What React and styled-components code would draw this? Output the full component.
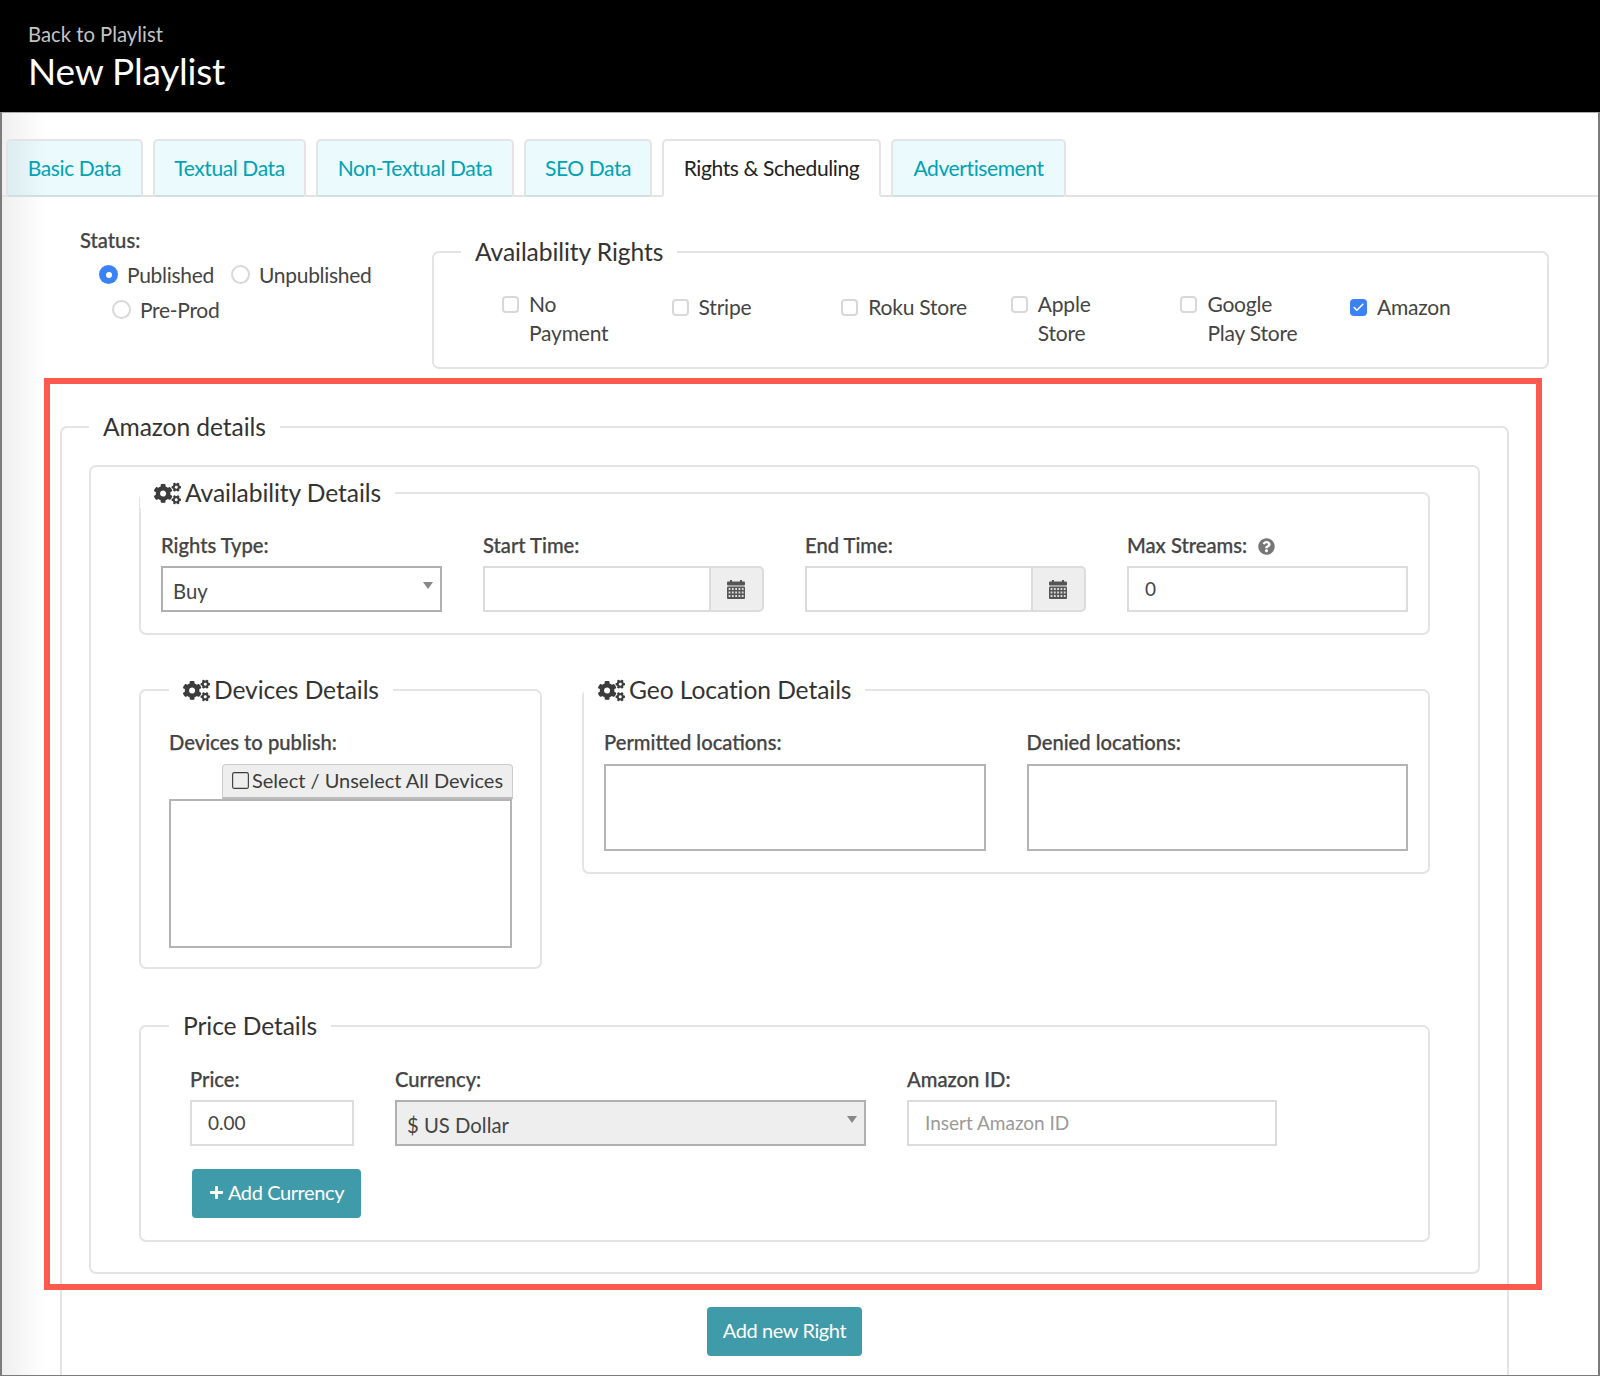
import styled, { createGlobalStyle } from 'styled-components';
import { Check, Square } from 'lucide-react';
import { FaCogs, FaQuestionCircle, FaPlus } from 'react-icons/fa';

const GlobalStyle = createGlobalStyle`
  * { box-sizing: border-box; }
  body {
    margin: 0;
    background: #fff;
    font-family: Lato, "Open Sans", sans-serif;
    color: #333;
  }
`;

const Page = styled.div`
  position: relative;
  width: 1600px;
  height: 1376px;
  overflow: hidden;
`;

const Header = styled.header`
  height: 112px;
  background: #000;
  padding: 21px 0 0 28px;
`;

const BackLink = styled.a`
  display: block;
  color: #c4c4c4;
  font-size: 20.3px;
  line-height: 27px;
`;

const Title = styled.h1`
  margin: 0;
  color: #fff;
  font-size: 37px;
  line-height: 46px;
  font-weight: 400;
  letter-spacing: -0.2px;
`;

const Content = styled.main`
  height: 1264px;
  overflow: hidden;
  border: 2px solid #7c7c7c;
  border-top: 1px solid #aaa;
  border-bottom: 1px solid #7c7c7c;
  background: linear-gradient(90deg, #efefef 0, #fff 44px);
`;

const TabBar = styled.nav`
  display: flex;
  gap: 10px;
  height: 84px;
  padding: 26px 0 0 4px;
  border-bottom: 2px solid #e2e2e2;
`;

const Tab = styled.a`
  width: ${(p) => p.$w}px;
  height: 58px;
  border: 2px solid #e4e4e4;
  border-bottom: ${(p) => (p.$active ? '2px solid #fff' : '0')};
  border-radius: 5px 5px 0 0;
  background: ${(p) => (p.$active ? '#fff' : 'rgba(0, 190, 225, 0.08)')};
  color: ${(p) => (p.$active ? '#222' : '#00a2b3')};
  font-size: 21px;
  line-height: 54px;
  letter-spacing: -0.4px;
  text-align: center;
`;

const TopRow = styled.section`
  display: grid;
  grid-template-columns: 430px 1117px;
  align-items: start;
  margin-top: 40px;
`;

const StatusBlock = styled.div`
  margin: -9px 0 0 78px;
`;

const FieldLabel = styled.label`
  display: block;
  color: #444;
  font-size: 20.2px;
  line-height: 24px;
  font-weight: 500;
  -webkit-text-stroke: 0.25px #444;
  margin-bottom: ${(p) => p.$gap ?? 9}px;
`;

const RadioRow = styled.div`
  display: flex;
  align-items: center;
  height: 35px;
  margin-left: ${(p) => p.$indent}px;
`;

const RadioItem = styled.span`
  display: flex;
  align-items: center;
  flex: none;
  gap: 9px;
  width: ${(p) => p.$w}px;
  font-size: 21px;
  letter-spacing: -0.3px;
  color: #444;
`;

const RadioDot = styled.span`
  position: relative;
  flex: none;
  width: 19px;
  height: 19px;
  border-radius: 50%;
  border: ${(p) => (p.$on ? '0' : '2px solid #d8d8d8')};
  background: ${(p) => (p.$on ? '#3b82f6' : '#fff')};
  &::after {
    content: '';
    display: ${(p) => (p.$on ? 'block' : 'none')};
    position: absolute;
    left: 6.5px;
    top: 6.5px;
    width: 6px;
    height: 6px;
    border-radius: 50%;
    background: #fff;
  }
`;

const Box = styled.fieldset`
  min-width: 0;
  margin: ${(p) => p.$margin ?? '0'};
  padding: ${(p) => p.$pad};
  border: 2px solid #e4e4e4;
  border-radius: 7px;
`;

const BoxTitle = styled.legend`
  display: flex;
  align-items: center;
  gap: 4px;
  margin-left: ${(p) => p.$ml ?? 0}px;
  padding: 0 14px;
  color: #333;
  font-size: 24.6px;
  line-height: 30px;
  letter-spacing: -0.08px;
  svg {
    color: #3c3c3c;
    font-size: 27px;
  }
`;

const PayGrid = styled.div`
  display: grid;
  grid-template-columns: repeat(6, 169.6px);
`;

const PayItem = styled.div`
  display: flex;
  align-items: flex-start;
  gap: 10px;
  margin-top: ${(p) => (p.$single ? 3 : 0)}px;
  color: #444;
  font-size: 21px;
  line-height: 28.5px;
  letter-spacing: -0.2px;
`;

const CheckBox = styled.span`
  display: flex;
  align-items: center;
  justify-content: center;
  flex: none;
  width: 17px;
  height: 17px;
  margin-top: 6px;
  border: ${(p) => (p.$on ? '0' : '2px solid #d8d8d8')};
  border-radius: 4px;
  background: ${(p) => (p.$on ? '#3b82f6' : '#fff')};
  color: #fff;
`;

const OuterBox = styled.div`
  padding: 11px 48px 30px;
  border: 2px solid #e4e4e4;
  border-radius: 7px;
`;

const FieldGrid = styled.div`
  display: grid;
  grid-template-columns: ${(p) => p.$cols};
  column-gap: 41px;
`;

const DetailRow = styled.div`
  display: grid;
  grid-template-columns: 403px 1fr;
  column-gap: 40px;
  align-items: start;
  margin-top: 40px;
`;

const TextInput = styled.input`
  display: block;
  width: 100%;
  height: 46px;
  padding: 0 16px 2px;
  border: 2px solid #dcdcdc;
  border-radius: 0;
  outline: 0;
  background: #fff;
  color: #444;
  font-family: inherit;
  font-size: 19px;
  &::placeholder {
    color: #999;
  }
`;

const SelectWrap = styled.div`
  position: relative;
  &::after {
    content: '';
    position: absolute;
    top: 16px;
    right: 9px;
    border-left: 5.5px solid transparent;
    border-right: 5.5px solid transparent;
    border-top: 7px solid #888;
  }
`;

const Select = styled.select`
  display: block;
  width: 100%;
  height: 46px;
  padding: 3px 0 0 10px;
  appearance: none;
  border: 2px solid #b0b0b0;
  border-radius: 0;
  background: ${(p) => (p.$grey ? '#eee' : '#fff')};
  color: #444;
  font-family: inherit;
  font-size: 20.3px;
`;

const InputGroup = styled.div`
  display: flex;
`;

const GroupAddon = styled.span`
  display: flex;
  align-items: center;
  justify-content: center;
  flex: none;
  width: 53px;
  height: 46px;
  padding-right: 1px;
  border: 2px solid #dcdcdc;
  border-left: 0;
  border-radius: 0 5px 5px 0;
  background: #eee;
`;

const HelpIcon = styled(FaQuestionCircle)`
  margin-left: 11px;
  color: #777;
  font-size: 17px;
  vertical-align: -2px;
`;

const SelectAll = styled.button`
  display: flex;
  align-items: center;
  gap: 1px;
  width: 291px;
  height: 35px;
  margin-left: 53px;
  padding: 0 0 2px 7px;
  border: 1px solid #ccc;
  border-bottom: 2px solid #bbb;
  border-radius: 4px 4px 0 0;
  background: #eee;
  color: #3c3c3c;
  font-family: inherit;
  font-size: 20px;
  white-space: nowrap;
`;

const ListArea = styled.div`
  height: ${(p) => p.$h}px;
  border: 2px solid #b4b4b4;
  background: #fff;
`;

const ActionButton = styled.button`
  display: flex;
  align-items: center;
  justify-content: center;
  gap: 4px;
  width: ${(p) => p.$w}px;
  height: 49px;
  margin: ${(p) => p.$margin};
  padding: 0 0 3px;
  border: 0;
  border-radius: 4px;
  background: #3f9aa9;
  color: #fff;
  font-family: inherit;
  font-size: 20px;
  letter-spacing: -0.4px;
  svg {
    font-size: 15px;
  }
`;

const Annotation = styled.div`
  position: absolute;
  left: 44px;
  top: 378px;
  width: 1498px;
  height: 912px;
  border: 6px solid #fd5a4f;
  pointer-events: none;
`;

const tabs = [
  ['Basic Data', 137],
  ['Textual Data', 153],
  ['Non-Textual Data', 198],
  ['SEO Data', 128],
  ['Rights & Scheduling', 219, true],
  ['Advertisement', 175],
];

const payments = [
  { text: ['No', 'Payment'] },
  { text: ['Stripe'], single: true },
  { text: ['Roku Store'], single: true },
  { text: ['Apple', 'Store'] },
  { text: ['Google', 'Play Store'] },
  { text: ['Amazon'], single: true, on: true },
];

// small grid calendar, closer to the picture than the fa one
const CalendarIcon = () => (
  <svg width="18" height="19" viewBox="0 0 18 19" fill="#555">
    <rect x="3" y="0" width="2" height="3" />
    <rect x="13" y="0" width="2" height="3" />
    <rect x="0" y="1.5" width="18" height="4" rx="1" />
    <rect x="0" y="6.5" width="18" height="12.5" rx="1" />
    {[8, 11.5, 15].map((y) =>
      [1.6, 4.9, 8.2, 11.5, 14.8].map((x) => (
        <rect key={`${x}-${y}`} x={x} y={y} width="1.8" height="2" fill="#ddd" />
      ))
    )}
  </svg>
);

export default function App() {
  return (
    <Page>
      <GlobalStyle />
      <Header>
        <BackLink>Back to Playlist</BackLink>
        <Title>New Playlist</Title>
      </Header>
      <Content>
        <TabBar>
          {tabs.map(([label, w, active]) => (
            <Tab key={label} $w={w} $active={active}>{label}</Tab>
          ))}
        </TabBar>

        <TopRow>
          <StatusBlock>
            <FieldLabel $gap={5}>Status:</FieldLabel>
            <RadioRow $indent={19}>
              <RadioItem $w={132}><RadioDot $on />Published</RadioItem>
              <RadioItem $w={140}><RadioDot />Unpublished</RadioItem>
            </RadioRow>
            <RadioRow $indent={32}>
              <RadioItem $w={120}><RadioDot />Pre-Prod</RadioItem>
            </RadioRow>
          </StatusBlock>
          <Box $pad="23px 0 20px 68px">
            <BoxTitle $ml={-41}>Availability Rights</BoxTitle>
            <PayGrid>
              {payments.map((p) => (
                <PayItem key={p.text[0]} $single={p.single}>
                  <CheckBox $on={p.on}>{p.on && <Check size={13} strokeWidth={3} />}</CheckBox>
                  <span>{p.text.map((t) => <div key={t}>{t}</div>)}</span>
                </PayItem>
              ))}
            </PayGrid>
          </Box>
        </TopRow>

        <Box $margin="43px 89px 0 58px" $pad="23px 27px 60px 27px">
          <BoxTitle $ml={0}>Amazon details</BoxTitle>
          <OuterBox>
            <Box $pad="25px 20px 21px 20px">
              <BoxTitle $ml={-21}><FaCogs />Availability Details</BoxTitle>
              <FieldGrid $cols="repeat(4, 281px)">
                <div>
                  <FieldLabel>Rights Type:</FieldLabel>
                  <SelectWrap>
                    <Select defaultValue="Buy"><option>Buy</option></Select>
                  </SelectWrap>
                </div>
                <div>
                  <FieldLabel>Start Time:</FieldLabel>
                  <InputGroup>
                    <TextInput />
                    <GroupAddon><CalendarIcon /></GroupAddon>
                  </InputGroup>
                </div>
                <div>
                  <FieldLabel>End Time:</FieldLabel>
                  <InputGroup>
                    <TextInput />
                    <GroupAddon><CalendarIcon /></GroupAddon>
                  </InputGroup>
                </div>
                <div>
                  <FieldLabel>Max Streams:<HelpIcon /></FieldLabel>
                  <TextInput defaultValue="0" />
                </div>
              </FieldGrid>
            </Box>

            <DetailRow>
              <Box $pad="25px 28px 19px 28px">
                <BoxTitle $ml={0}><FaCogs />Devices Details</BoxTitle>
                <FieldLabel $gap={10}>Devices to publish:</FieldLabel>
                <SelectAll><Square size={21} strokeWidth={1.3} />Select / Unselect All Devices</SelectAll>
                <ListArea $h={149} />
              </Box>
              <Box $pad="25px 20px 21px">
                <BoxTitle $ml={-20}><FaCogs />Geo Location Details</BoxTitle>
                <FieldGrid $cols="1fr 1fr">
                  <div>
                    <FieldLabel $gap={10}>Permitted locations:</FieldLabel>
                    <ListArea $h={87} />
                  </div>
                  <div>
                    <FieldLabel $gap={10}>Denied locations:</FieldLabel>
                    <ListArea $h={87} />
                  </div>
                </FieldGrid>
              </Box>
            </DetailRow>

            <Box $margin="42px 0 0" $pad="26px 0 22px 49px">
              <BoxTitle $ml={-21}>Price Details</BoxTitle>
              <FieldGrid $cols="164px 471px 370px">
                <div>
                  <FieldLabel>Price:</FieldLabel>
                  <TextInput defaultValue="0.00" />
                </div>
                <div>
                  <FieldLabel>Currency:</FieldLabel>
                  <SelectWrap>
                    <Select $grey defaultValue="$ US Dollar"><option>$ US Dollar</option></Select>
                  </SelectWrap>
                </div>
                <div>
                  <FieldLabel>Amazon ID:</FieldLabel>
                  <TextInput placeholder="Insert Amazon ID" />
                </div>
              </FieldGrid>
              <ActionButton $w={169} $margin="23px 0 0 2px"><FaPlus />Add Currency</ActionButton>
            </Box>
          </OuterBox>
          <ActionButton $w={155} $margin="33px auto 0">Add new Right</ActionButton>
        </Box>
      </Content>
      <Annotation />
    </Page>
  );
}
